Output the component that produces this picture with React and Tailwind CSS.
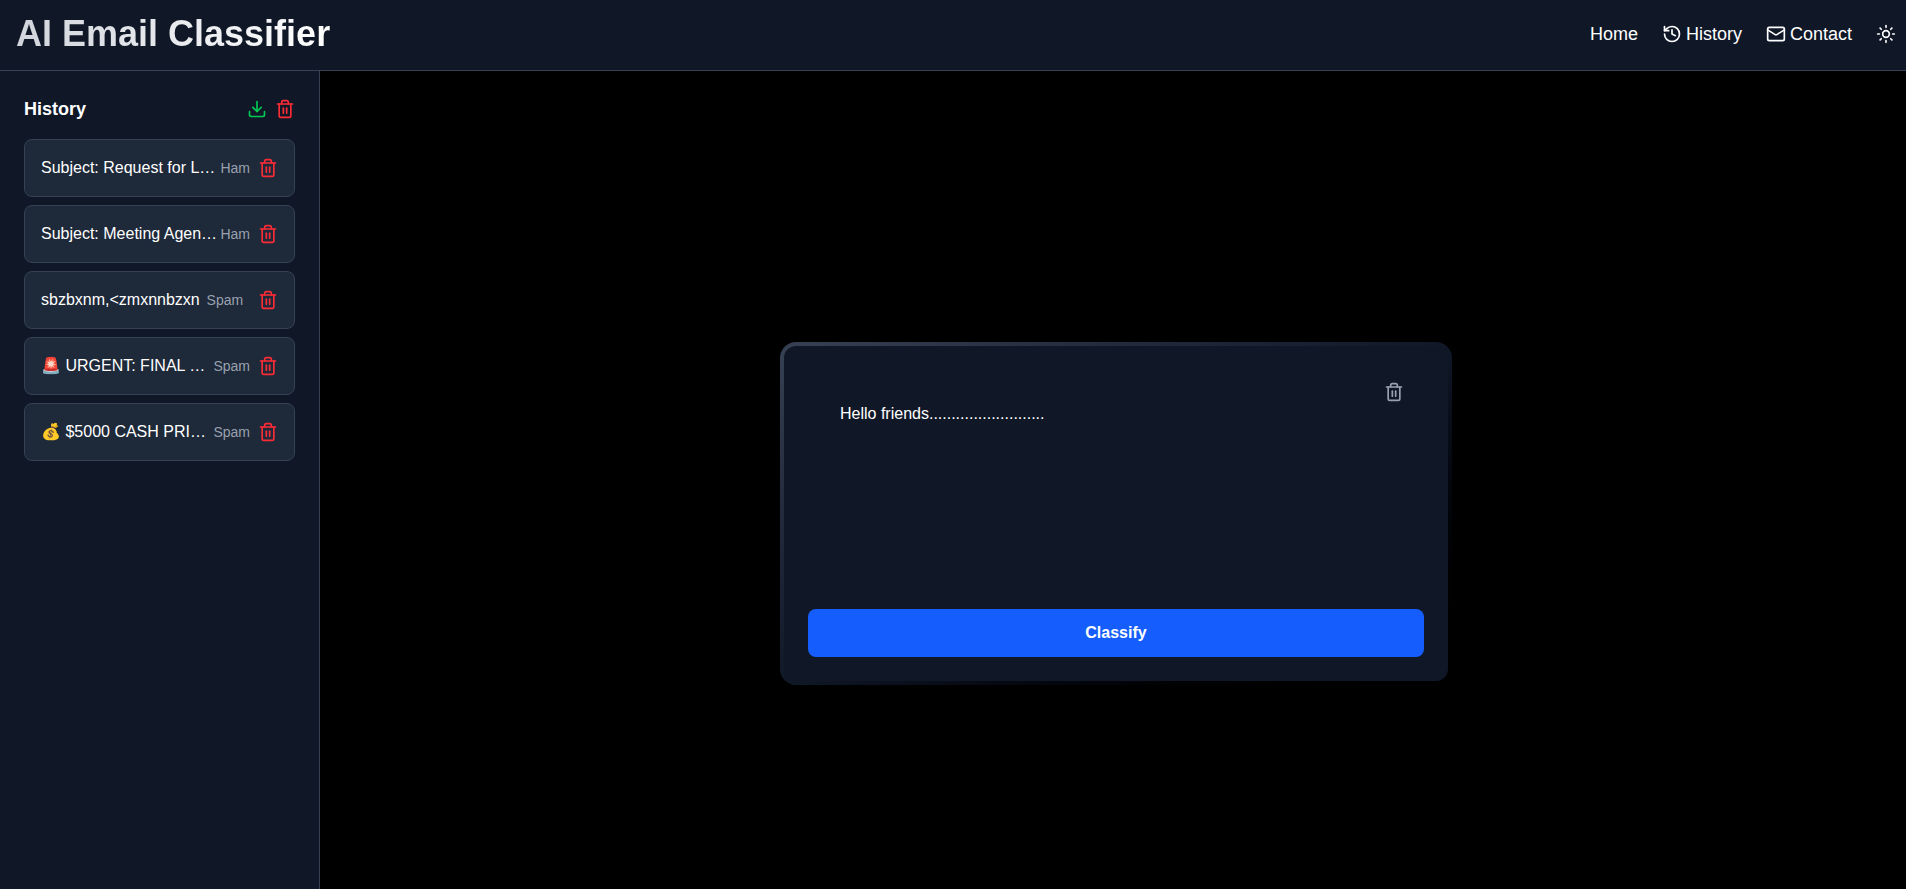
import { useState } from "react";
import { Download, History, Mail, Sun, Trash2 } from "lucide-react";

const initialItems = [
  { id: 1, text: "Subject: Request for Leave Approval", label: "Ham" },
  { id: 2, text: "Subject: Meeting Agenda for Monday", label: "Ham" },
  { id: 3, text: "sbzbxnm,<zmxnnbzxn", label: "Spam" },
  { id: 4, text: "🚨 URGENT: FINAL NOTICE", label: "Spam" },
  { id: 5, text: "💰 $5000 CASH PRIZE WINNER", label: "Spam" },
];

function Header() {
  return (
    <header className="flex items-center justify-between border-b border-gray-700 bg-gray-900 pt-3.5 pr-2.5 pb-4 pl-4">
      <h1 className="bg-gradient-to-r from-gray-300 to-white bg-clip-text text-4xl font-bold text-transparent">
        AI Email Classifier
      </h1>
      <nav className="flex items-center gap-6 text-lg">
        <a href="#home">Home</a>
        <a href="#history" className="flex items-center gap-1">
          <History size={20} />
          History
        </a>
        <a href="#contact" className="flex items-center gap-1">
          <Mail size={20} />
          Contact
        </a>
        <button type="button" aria-label="Toggle theme">
          <Sun size={20} />
        </button>
      </nav>
    </header>
  );
}

function Sidebar({ items, onRemove, onClear }) {
  return (
    <aside className="w-80 shrink-0 border-r border-gray-700 bg-gray-900 p-6">
      <div className="mb-4 flex items-center justify-between">
        <h2 className="text-lg font-bold">History</h2>
        <div className="flex gap-2">
          <button type="button" aria-label="Download history" className="text-green-500">
            <Download size={20} />
          </button>
          <button type="button" aria-label="Clear history" className="text-red-500" onClick={onClear}>
            <Trash2 size={20} />
          </button>
        </div>
      </div>
      <ul className="flex flex-col gap-2">
        {items.map((item) => (
          <li
            key={item.id}
            className="flex items-center justify-between rounded-lg border border-gray-700 bg-gray-800 p-4"
          >
            <span className="truncate">{item.text}</span>
            <span className="text-sm text-gray-400">{item.label}</span>
            <button
              type="button"
              aria-label="Delete entry"
              className="ml-2 shrink-0 text-red-500"
              onClick={() => onRemove(item.id)}
            >
              <Trash2 size={20} />
            </button>
          </li>
        ))}
      </ul>
    </aside>
  );
}

function Classifier() {
  const [text, setText] = useState("Hello friends..........................");
  return (
    <main className="flex min-w-0 flex-1 items-center justify-center bg-black pt-[66px] pl-1.5">
      <div className="w-full max-w-2xl rounded-2xl bg-gradient-to-br from-gray-700 via-gray-900 to-black p-1">
        <div className="rounded-xl bg-gray-900 p-6">
          <div className="relative mb-2">
            <textarea
              aria-label="Email text"
              value={text}
              onChange={(e) => setText(e.target.value)}
              className="block h-[231px] w-full resize-none rounded-lg bg-transparent p-8 text-white outline-none"
            />
            <button
              type="button"
              aria-label="Clear text"
              className="absolute top-3 right-5 text-gray-400"
              onClick={() => setText("")}
            >
              <Trash2 size={20} />
            </button>
          </div>
          <button type="button" className="w-full rounded-lg bg-blue-600 py-3 font-semibold text-white">
            Classify
          </button>
        </div>
      </div>
    </main>
  );
}

export default function App() {
  const [items, setItems] = useState(initialItems);
  return (
    <div className="flex min-h-screen flex-col bg-black font-['Liberation_Sans',Arial,sans-serif] text-white">
      <Header />
      <div className="flex flex-1">
        <Sidebar
          items={items}
          onRemove={(id) => setItems(items.filter((item) => item.id !== id))}
          onClear={() => setItems([])}
        />
        <Classifier />
      </div>
    </div>
  );
}
